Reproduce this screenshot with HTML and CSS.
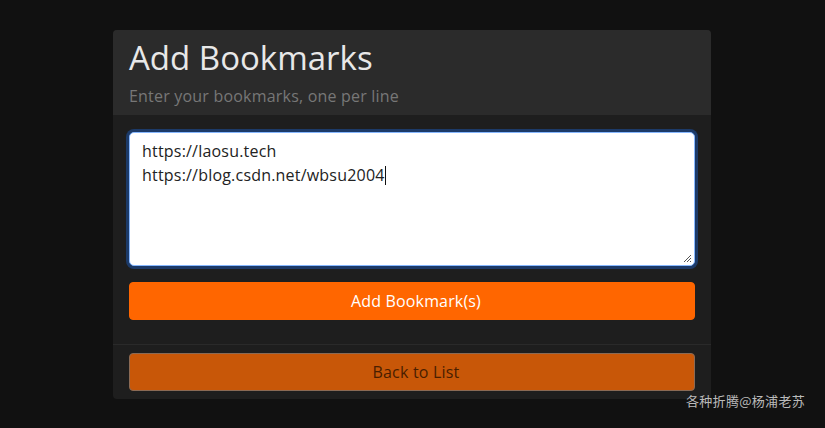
FILE: index.html
```html
<!DOCTYPE html>
<html lang="zh">
<head>
<meta charset="utf-8">
<title>Add Bookmarks</title>
<link rel="stylesheet" href="styles.css">
</head>
<body>
<main class="page">
  <section class="card">
    <header class="card-header">
      <h1 class="title">Add Bookmarks</h1>
      <p class="subtitle">Enter your bookmarks, one per line</p>
    </header>
    <div class="card-body">
      <div class="textarea"><div class="ta-text">https://laosu.tech<br>https://blog.csdn.net/wbsu2004<span class="caret"></span></div><svg class="grip" width="9" height="9" viewBox="0 0 9 9"><path d="M8 1L1 8M8 4L4 8M8 7L7 8" stroke="#555" stroke-width="1"/></svg></div>
      <button class="btn btn-add">Add Bookmark(s)</button>
    </div>
    <footer class="card-footer">
      <button class="btn btn-back">Back to List</button>
    </footer>
  </section>
  <div class="watermark">各种折腾@杨浦老苏</div>
</main>
</body>
</html>
```
FILE: styles.css
```css
* { box-sizing: border-box; }
html, body { margin: 0; padding: 0; }
body {
  background: #111111;
  width: 825px;
  height: 428px;
  overflow: hidden;
  font-family: "Open Sans", "Noto Sans", "Noto Sans CJK SC", sans-serif;
}
.page {
  position: relative;
  height: 428px;
  padding-top: 30px;
  padding-left: 113px;
}
.card {
  width: 598px;
  background: #1e1e1e;
  border-radius: 4px;
  overflow: hidden;
  display: flex;
  flex-direction: column;
}
.card-header {
  background: #2b2b2b;
  height: 85px;
  padding: 8px 16px 0 16px;
}
.title {
  margin: 0;
  font-weight: 400;
  font-size: 33px;
  line-height: 40px;
  color: #e8e8e8;
}
.subtitle {
  margin: 8px 0 0 0;
  font-size: 16px;
  line-height: 20px;
  letter-spacing: 0.2px;
  color: #777777;
}
.card-body {
  padding: 17px 16px 24px 16px;
  display: flex;
  flex-direction: column;
  gap: 16px;
  border-bottom: 1px solid #2a2a2a;
}
.textarea {
  position: relative;
  height: 134px;
  background: #ffffff;
  border: 1px solid #86b7fe;
  border-radius: 5px;
  box-shadow: 0 0 0 3px #1c3a68;
  padding: 6px 12px;
}
.ta-text {
  font-size: 16px;
  line-height: 24px;
  letter-spacing: 0.2px;
  color: #222222;
}
.caret {
  display: inline-block;
  width: 1px;
  height: 19px;
  background: #111;
  vertical-align: -4px;
}
.grip {
  position: absolute;
  right: 2px;
  bottom: 2px;
}
.btn {
  display: block;
  width: 100%;
  height: 38px;
  border-radius: 4px;
  font-family: inherit;
  font-size: 16px;
  padding: 0 0 0 8px;
}
.btn-add {
  background: #ff6600;
  border: 1px solid #ff6600;
  color: #ffffff;
  letter-spacing: 0.15px;
}
.card-footer {
  padding: 8px 16px;
}
.btn-back {
  background: #c85708;
  border: 1px solid #8a6a55;
  color: #4a1e00;
  letter-spacing: 0.2px;
}
.watermark {
  position: absolute;
  left: 686px;
  top: 391px;
  font-size: 13px;
  color: #bbbbbb;
  font-family: "Noto Sans CJK SC", sans-serif;
  letter-spacing: 0.3px;
}
```
